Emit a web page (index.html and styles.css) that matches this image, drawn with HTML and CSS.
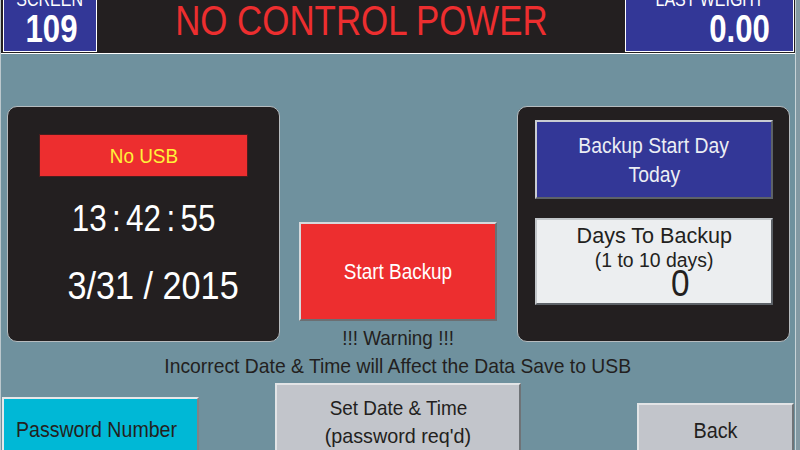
FILE: index.html
```html
<!DOCTYPE html>
<html lang="en">
<head>
<meta charset="utf-8">
<title>Screen 109 - Backup</title>
<link rel="stylesheet" href="styles.css">
</head>
<body>
<div class="page">
  <header class="top">
    <div class="tag tag-screen">
      <div class="tag-label"><span class="sx sx80">SCREEN</span></div>
      <div class="tag-value"><span class="sx sx80">109</span></div>
    </div>
    <div class="title"><span class="sx sx83">NO CONTROL POWER</span></div>
    <div class="tag tag-weight">
      <div class="tag-label"><span class="sx sx80">LAST WEIGHT</span></div>
      <div class="tag-value"><span class="sx sx80 from-right">0.00</span></div>
    </div>
  </header>

  <main class="main">
    <div class="row">
      <section class="panel">
        <div class="usb"><span class="sx">No USB</span></div>
        <div class="time"><span class="sx sx85">13 : 42 : 55</span></div>
        <div class="date"><span class="sx">3/31 / 2015</span></div>
      </section>

      <div class="middle">
        <div class="btn btn-start"><span class="sx sx86">Start Backup</span></div>
        <div class="warn"><span class="sx">!!! Warning !!!</span></div>
      </div>

      <section class="panel">
        <div class="btn btn-day">
          <span class="sx sx88">Backup Start Day</span>
          <span class="sx sx88">Today</span>
        </div>
        <div class="btn days">
          <div class="days-title"><span class="sx sx98">Days To Backup</span></div>
          <div class="days-range"><span class="sx sx97">(1 to 10 days)</span></div>
          <div class="days-value"><span class="sx">0</span></div>
        </div>
      </section>
    </div>

    <div class="warn warn-line"><span class="sx sx92">Incorrect Date &amp; Time will Affect the Data Save to USB</span></div>

    <div class="actions">
      <div class="btn btn-pw"><span class="sx sx89">Password Number</span></div>
      <div class="btn btn-grey btn-set">
        <div><span class="sx">Set Date &amp; Time</span></div>
        <div><span class="sx sx94">(password req'd)</span></div>
      </div>
      <div class="btn btn-grey btn-back"><span class="sx">Back</span></div>
    </div>
  </main>
</div>
</body>
</html>
```

FILE: styles.css
```css
html, body {
  margin: 0;
  padding: 0;
}

body {
  width: 800px;
  height: 450px;
  overflow: hidden;
  background: #8399a3;
  font-family: "Liberation Sans", Arial, sans-serif;
  color: #231f20;
}

.page {
  width: 794px;
  height: 450px;
  border-left: 1px solid #bcc8cd;
  border-right: 1px solid #c8d3d7;
  background: #6f919e;
  overflow: hidden;
}

/* horizontally condensed text, like the HMI font */
.sx {
  display: inline-block;
  white-space: nowrap;
  transform: scaleX(0.9);
  transform-origin: center;
}
.sx80 { transform: scaleX(0.8); }
.sx83 { transform: scaleX(0.83); }
.sx85 { transform: scaleX(0.85); }
.sx86 { transform: scaleX(0.86); }
.sx88 { transform: scaleX(0.88); }
.sx89 { transform: scaleX(0.89); }
.sx92 { transform: scaleX(0.92); }
.sx94 { transform: scaleX(0.94); }
.sx97 { transform: scaleX(0.97); }
.sx98 { transform: scaleX(0.98); }
.from-right { transform-origin: right center; }

/* ---------- header ---------- */
.top {
  display: flex;
  height: 53px;
  background: #231f20;
  border-bottom: 1px solid #ffffff;
  overflow: hidden;
}

.tag {
  height: 52px;
  box-sizing: border-box;
  border: 1px solid #ffffff;
  border-top: 0;
  background: #333797;
  color: #ffffff;
  text-align: center;
}
.tag-screen {
  width: 94px;
  margin-left: 2px;
}
.tag-weight {
  width: 169px;
  margin-right: 1px;
}
.tag-label {
  margin-top: -11px;
  font-size: 20px;
  line-height: 20px;
}
.tag-value {
  font-size: 39px;
  font-weight: bold;
  line-height: 40px;
}
.tag-screen .tag-value {
  padding-left: 4px;
}
.tag-weight .tag-value {
  text-align: right;
  padding-right: 23px;
}

.title {
  flex: 1;
  text-align: center;
  font-size: 42px;
  line-height: 41px;
  color: #ed2e2f;
}

/* ---------- main ---------- */
.row {
  display: flex;
  align-items: flex-start;
  height: 244px;
  padding: 52px 0 0 6px;
}

.panel {
  width: 273px;
  height: 236px;
  box-sizing: border-box;
  border: 1px solid #b7bcbf;
  border-radius: 10px;
  background: #231f20;
  color: #ffffff;
  text-align: center;
}

.usb {
  width: 209px;
  height: 43px;
  box-sizing: border-box;
  margin: 27px auto 0;
  background: #ed2e2f;
  border: 1px solid #4a1d1e;
  color: #fff23a;
  font-size: 21px;
  line-height: 41px;
}
.time {
  margin-top: 22px;
  font-size: 37px;
  line-height: 40px;
  word-spacing: -4px;
}
.date {
  margin-top: 27px;
  padding-left: 19px;
  font-size: 38px;
  line-height: 40px;
}

.middle {
  width: 198px;
  margin: 0 20px 0 19px;
  text-align: center;
}

.btn {
  box-sizing: border-box;
  border: 2px solid;
  border-color: #d6d9dc #6b6f73 #6b6f73 #d6d9dc;
}

.btn-start {
  margin-top: 116px;
  height: 99px;
  background: #ed2e2f;
  color: #ffffff;
  display: flex;
  align-items: center;
  justify-content: center;
  font-size: 22px;
  line-height: 26px;
}

.warn {
  margin-top: 5px;
  font-size: 21px;
  line-height: 24px;
  color: #231f20;
}
.warn-line {
  margin-top: 4px;
  text-align: center;
}

.btn-day {
  width: 238px;
  height: 79px;
  margin: 13px 0 0 17px;
  background: #333797;
  color: #eceef4;
  border-color: #c9ccd2 #5d6268 #5d6268 #c9ccd2;
  display: flex;
  flex-direction: column;
  align-items: center;
  justify-content: center;
  font-size: 22px;
  line-height: 29px;
}

.days {
  width: 238px;
  height: 87px;
  margin: 19px 0 0 17px;
  padding-top: 4px;
  background: #eceef0;
  color: #231f20;
  border-color: #c2c6ca #5d6268 #5d6268 #c2c6ca;
  text-align: center;
}
.days-title {
  font-size: 22px;
  line-height: 24px;
}
.days-range {
  font-size: 20px;
  line-height: 24px;
}
.days-value {
  margin-top: -3px;
  padding-left: 52px;
  font-size: 37px;
  line-height: 30px;
}

/* ---------- bottom buttons ---------- */
.actions {
  display: flex;
  align-items: flex-start;
  padding-left: 1px;
}

.btn-pw {
  width: 197px;
  height: 80px;
  margin-top: 19px;
  padding: 19px 8px 0 0;
  background: #00b8d6;
  border-color: #e6e8ea #7f8387 #7f8387 #e6e8ea;
  text-align: center;
  font-size: 22px;
  line-height: 24px;
}

.btn-grey {
  background: #c2c5cb;
  border-color: #e2e4e6 #6f7377 #6f7377 #e2e4e6;
  text-align: center;
}

.btn-set {
  width: 246px;
  height: 90px;
  margin: 5px 0 0 76px;
  padding-top: 9px;
  font-size: 21px;
  line-height: 28px;
}

.btn-back {
  width: 157px;
  height: 70px;
  margin: 25px 0 0 116px;
  padding-top: 14px;
  font-size: 22px;
  line-height: 24px;
}
```
